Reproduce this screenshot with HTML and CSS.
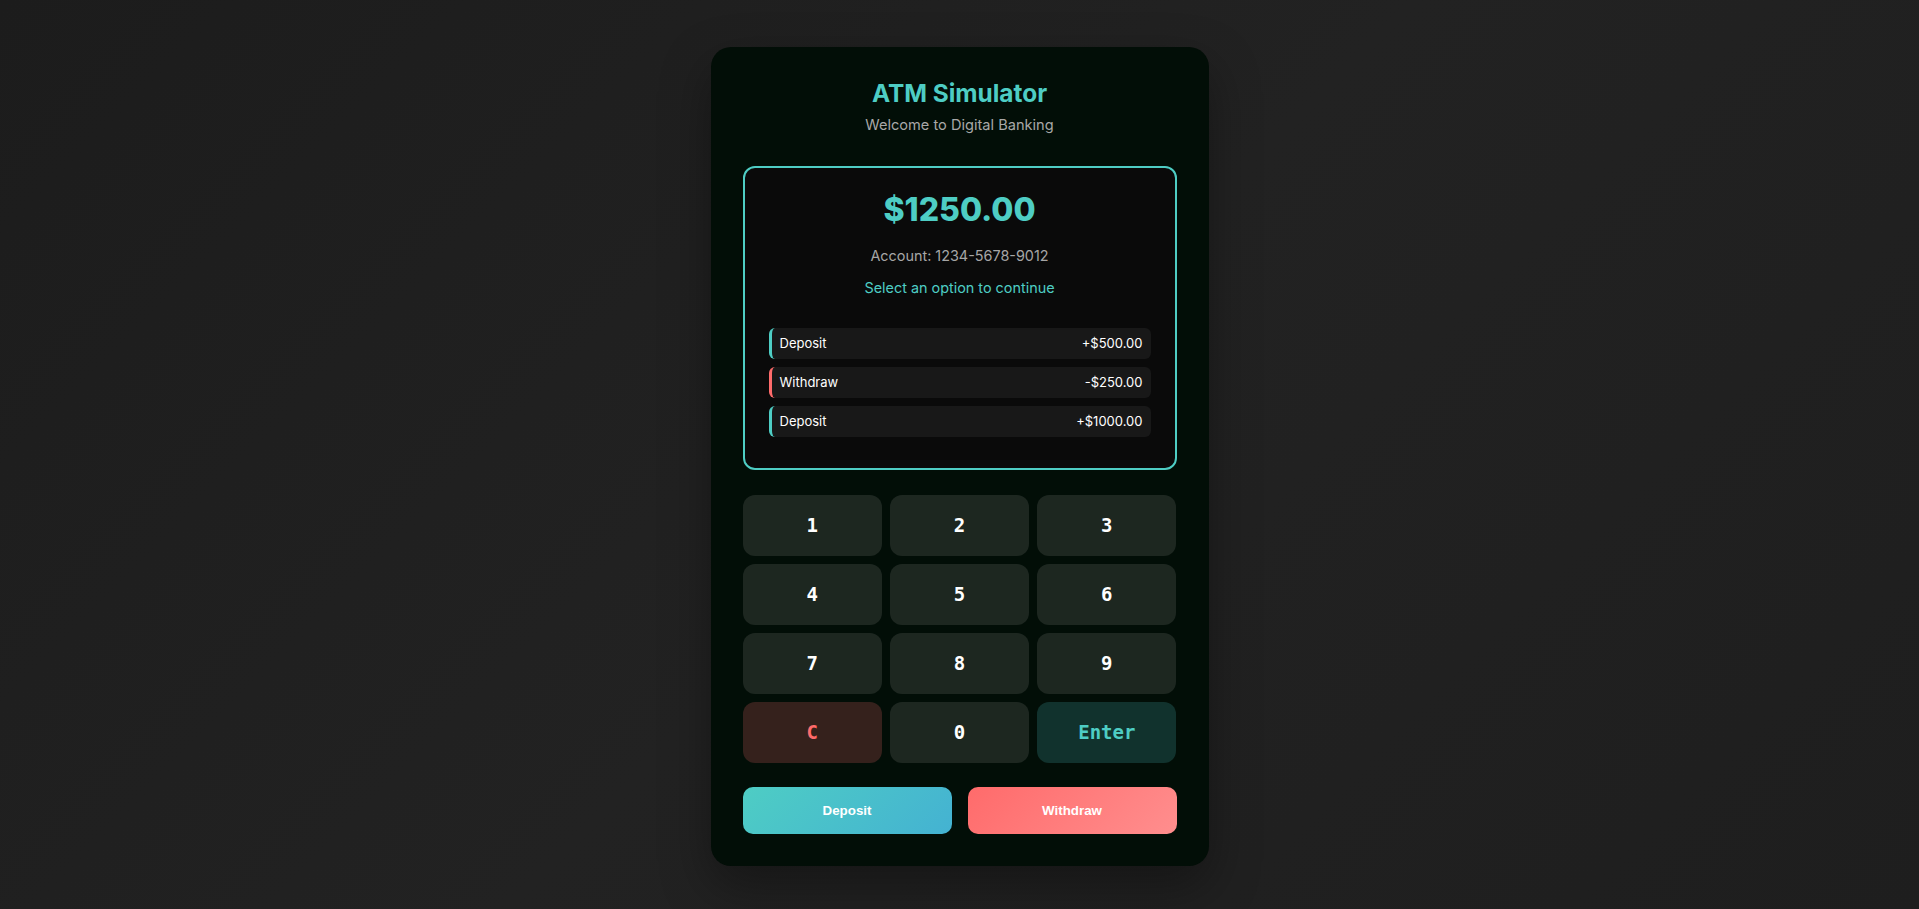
FILE: index.html
```html
<!DOCTYPE html>
<html lang="en">
<head>
<meta charset="utf-8">
<title>ATM Simulator</title>
<link rel="stylesheet" href="styles.css">
</head>
<body>
<main class="atm">
  <header class="atm-header">
    <h1 class="atm-title">ATM Simulator</h1>
    <p class="atm-subtitle">Welcome to Digital Banking</p>
  </header>

  <section class="screen">
    <div class="balance">$1250.00</div>
    <div class="account">Account: 1234-5678-9012</div>
    <div class="message">Select an option to continue</div>
    <ul class="history">
      <li class="tx tx-deposit"><span>Deposit</span><span>+$500.00</span></li>
      <li class="tx tx-withdraw"><span>Withdraw</span><span>-$250.00</span></li>
      <li class="tx tx-deposit"><span>Deposit</span><span>+$1000.00</span></li>
    </ul>
  </section>

  <div class="keypad">
    <button class="key">1</button>
    <button class="key">2</button>
    <button class="key">3</button>
    <button class="key">4</button>
    <button class="key">5</button>
    <button class="key">6</button>
    <button class="key">7</button>
    <button class="key">8</button>
    <button class="key">9</button>
    <button class="key key-clear">C</button>
    <button class="key">0</button>
    <button class="key key-enter">Enter</button>
  </div>

  <div class="actions">
    <button class="action action-deposit">Deposit</button>
    <button class="action action-withdraw">Withdraw</button>
  </div>
</main>
</body>
</html>
```

FILE: styles.css
```css
* {
  box-sizing: border-box;
}

html, body {
  margin: 0;
  padding: 0;
}

body {
  min-height: 100vh;
  padding-top: 4px;
  display: flex;
  align-items: center;
  justify-content: center;
  background: linear-gradient(135deg, #1c1c1c 0%, #222222 50%, #1e1e1e 100%);
  font-family: Inter, "Noto Sans", sans-serif;
  color: #ffffff;
}

.atm {
  width: 498px;
  padding: 32px;
  background: #020e07;
  border-radius: 20px;
  box-shadow: 0 20px 50px rgba(0, 0, 0, 0.35);
}

.atm-header {
  text-align: center;
  margin-bottom: 32px;
}

.atm-title {
  margin: 0 0 8px;
  font-size: 24.4px;
  font-weight: 700;
  color: #4ecdc4;
  line-height: 29px;
}

.atm-subtitle {
  margin: 0;
  font-size: 14.6px;
  line-height: 18px;
  color: #a8a8a8;
}

.screen {
  background: #0a0a0a;
  border: 2px solid #4ecdc4;
  border-radius: 12px;
  padding: 22px 24px 31.5px;
  text-align: center;
}

.balance {
  font-size: 32px;
  font-weight: 800;
  color: #4ecdc4;
  margin-bottom: 18px;
}

.account {
  font-size: 14.4px;
  color: #a6a6a6;
  margin-bottom: 15px;
}

.message {
  font-size: 14.4px;
  color: #4ecdc4;
  margin-bottom: 32px;
}

.history {
  list-style: none;
  margin: 0;
  padding: 0;
  display: flex;
  flex-direction: column;
  gap: 8px;
}

.tx {
  display: flex;
  justify-content: space-between;
  padding: 7.5px 8px;
  background: #181818;
  border-radius: 6px;
  border-left: 3px solid #4ecdc4;
  font-size: 13px;
  color: #ffffff;
}

.tx-withdraw {
  border-left-color: #ff6b6b;
}

.keypad {
  margin-top: 25px;
  display: grid;
  grid-template-columns: repeat(3, 1fr);
  gap: 8px;
}

.key {
  border: none;
  border-radius: 12px;
  background: #1d2720;
  color: #ffffff;
  font-family: "DejaVu Sans Mono", "Liberation Mono", monospace;
  font-weight: 700;
  font-size: 19px;
  line-height: 21px;
  padding: 20px 0;
}

.key-clear {
  background: #35211c;
  color: #ff6b6b;
}

.key-enter {
  background: #11322d;
  color: #4ecdc4;
}

.actions {
  margin-top: 24px;
  display: grid;
  grid-template-columns: 1fr 1fr;
  gap: 16px;
}

.action {
  border: none;
  border-radius: 10px;
  color: #ffffff;
  font-family: "Liberation Sans", Arial, sans-serif;
  font-weight: 700;
  font-size: 13.33px;
  line-height: 15px;
  padding: 16px 0;
}

.action-deposit {
  background: linear-gradient(135deg, #4ecdc4 0%, #44b2d2 100%);
}

.action-withdraw {
  background: linear-gradient(135deg, #ff6b6b 0%, #ff8e8e 100%);
}
```
